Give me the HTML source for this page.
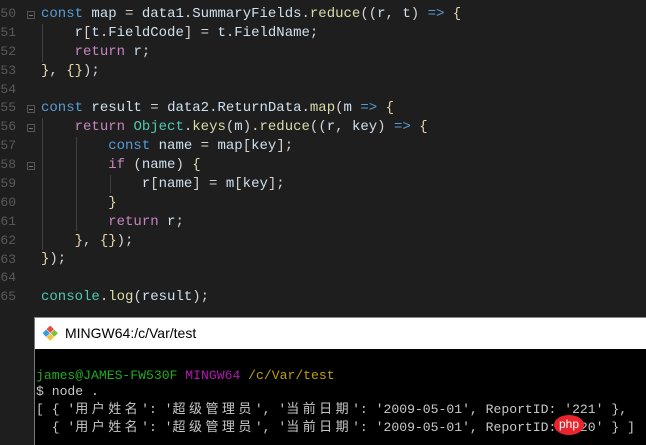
<!DOCTYPE html>
<html><head><meta charset="utf-8"><style>
body{margin:0;width:646px;height:444px;background:#1e1e1e;overflow:hidden;position:relative;font-family:"Liberation Mono",monospace}
.ln{position:absolute;left:0;width:16px;text-align:right;color:#5a5a5a;font-size:13px}
.code{position:absolute;left:41px;top:5px;font-size:14px;line-height:18.87px;color:#d4d4d4;white-space:pre;letter-spacing:0}
.k{color:#569cd6}.v{color:#cfe0ef}.r{color:#c586c0}.t{color:#4ec9b0}.f{color:#dcdcaa}.p{color:#e6d9a8}
.guide{position:absolute;width:1px;background:#404040}
.fold{position:absolute;left:27px;width:8px;height:8px;border:1px solid #555;box-sizing:border-box}
.fold:after{content:"";position:absolute;left:1px;top:3px;width:4px;height:1px;background:#777}
.win{position:absolute;left:34px;top:317px;width:612px;height:127px;background:#000;border-left:1px solid #777;border-top:1px solid #888}
.title{height:31px;background:#fff;font-family:"Liberation Sans",sans-serif;font-size:14px;color:#000;line-height:31px;padding-left:30px;position:relative}
.term{position:absolute;left:1px;top:50px;font-size:13.1px;line-height:16px;color:#c8c8c8;white-space:pre}
.c{font-family:"Noto Sans CJK SC",sans-serif;font-size:13px;letter-spacing:3.45px}
</style></head><body>
<div class="ln" style="top:6px">50</div><div class="ln" style="top:25px">51</div><div class="ln" style="top:44px">52</div><div class="ln" style="top:63px">53</div><div class="ln" style="top:82px">54</div><div class="ln" style="top:100px">55</div><div class="ln" style="top:119px">56</div><div class="ln" style="top:138px">57</div><div class="ln" style="top:157px">58</div><div class="ln" style="top:176px">59</div><div class="ln" style="top:195px">60</div><div class="ln" style="top:214px">61</div><div class="ln" style="top:233px">62</div><div class="ln" style="top:252px">63</div><div class="ln" style="top:270px">64</div><div class="ln" style="top:289px">65</div>
<div class="fold" style="top:11px"></div><div class="fold" style="top:105px"></div><div class="fold" style="top:124px"></div><div class="fold" style="top:162px"></div>
<div class="guide" style="left:42px;top:24px;height:38px"></div>
<div class="guide" style="left:42px;top:118px;height:132px"></div>
<div class="guide" style="left:76px;top:137px;height:94px"></div>
<div class="guide" style="left:110px;top:175px;height:18px"></div>
<div class="code"><span class="k">const</span> <span class="v">map</span> = <span class="v">data1</span>.<span class="v">SummaryFields</span>.<span class="f">reduce</span>((<span class="v">r</span>, <span class="v">t</span>) <span class="k">=&gt;</span> <span class="p">{</span>
    <span class="v">r</span>[<span class="v">t</span>.<span class="v">FieldCode</span>] = <span class="v">t</span>.<span class="v">FieldName</span>;
    <span class="r">return</span> <span class="v">r</span>;
<span class="p">}</span>, <span class="p">{}</span>);

<span class="k">const</span> <span class="v">result</span> = <span class="v">data2</span>.<span class="v">ReturnData</span>.<span class="f">map</span>(<span class="v">m</span> <span class="k">=&gt;</span> <span class="p">{</span>
    <span class="r">return</span> <span class="t">Object</span>.<span class="f">keys</span>(<span class="v">m</span>).<span class="f">reduce</span>((<span class="v">r</span>, <span class="v">key</span>) <span class="k">=&gt;</span> <span class="p">{</span>
        <span class="k">const</span> <span class="v">name</span> = <span class="v">map</span>[<span class="v">key</span>];
        <span class="r">if</span> (<span class="v">name</span>) <span class="p">{</span>
            <span class="v">r</span>[<span class="v">name</span>] = <span class="v">m</span>[<span class="v">key</span>];
        <span class="p">}</span>
        <span class="r">return</span> <span class="v">r</span>;
    <span class="p">}</span>, <span class="p">{}</span>);
<span class="p">}</span>);

<span class="t">console</span>.<span class="f">log</span>(<span class="v">result</span>);</div>
<div class="win">
<div class="title"><svg style="position:absolute;left:8px;top:8px" width="15" height="15" viewBox="0 0 13 13"><rect x="4" y="0.5" width="4.5" height="4.5" transform="rotate(45 6.25 2.75)" fill="#e94b3c"/><rect x="0.5" y="4" width="4.5" height="4.5" transform="rotate(45 2.75 6.25)" fill="#3b9be0"/><rect x="7.5" y="4" width="4.5" height="4.5" transform="rotate(45 9.75 6.25)" fill="#7cc242"/><rect x="4" y="7.5" width="4.5" height="4.5" transform="rotate(45 6.25 9.75)" fill="#f5c33b"/></svg>MINGW64:/c/Var/test</div>
<div class="term"><span style="color:#1fae1f">james@JAMES-FW530F</span> <span style="color:#b416b4">MINGW64</span> <span style="color:#c0a000">/c/Var/test</span>
$ node .
[ { '<span class="c">用户姓名</span>': '<span class="c">超级管理员</span>', '<span class="c">当前日期</span>': '2009-05-01', ReportID: '221' },
  { '<span class="c">用户姓名</span>': '<span class="c">超级管理员</span>', '<span class="c">当前日期</span>': '2009-05-01', ReportID: '220' } ]</div>
</div>
<div style="position:absolute;left:554px;top:415px;width:30px;height:20px;border-radius:50%;background:#e8242c;color:#fff;font-family:'Liberation Sans',sans-serif;font-size:12px;line-height:19px;text-align:center">php</div>
</body></html>
